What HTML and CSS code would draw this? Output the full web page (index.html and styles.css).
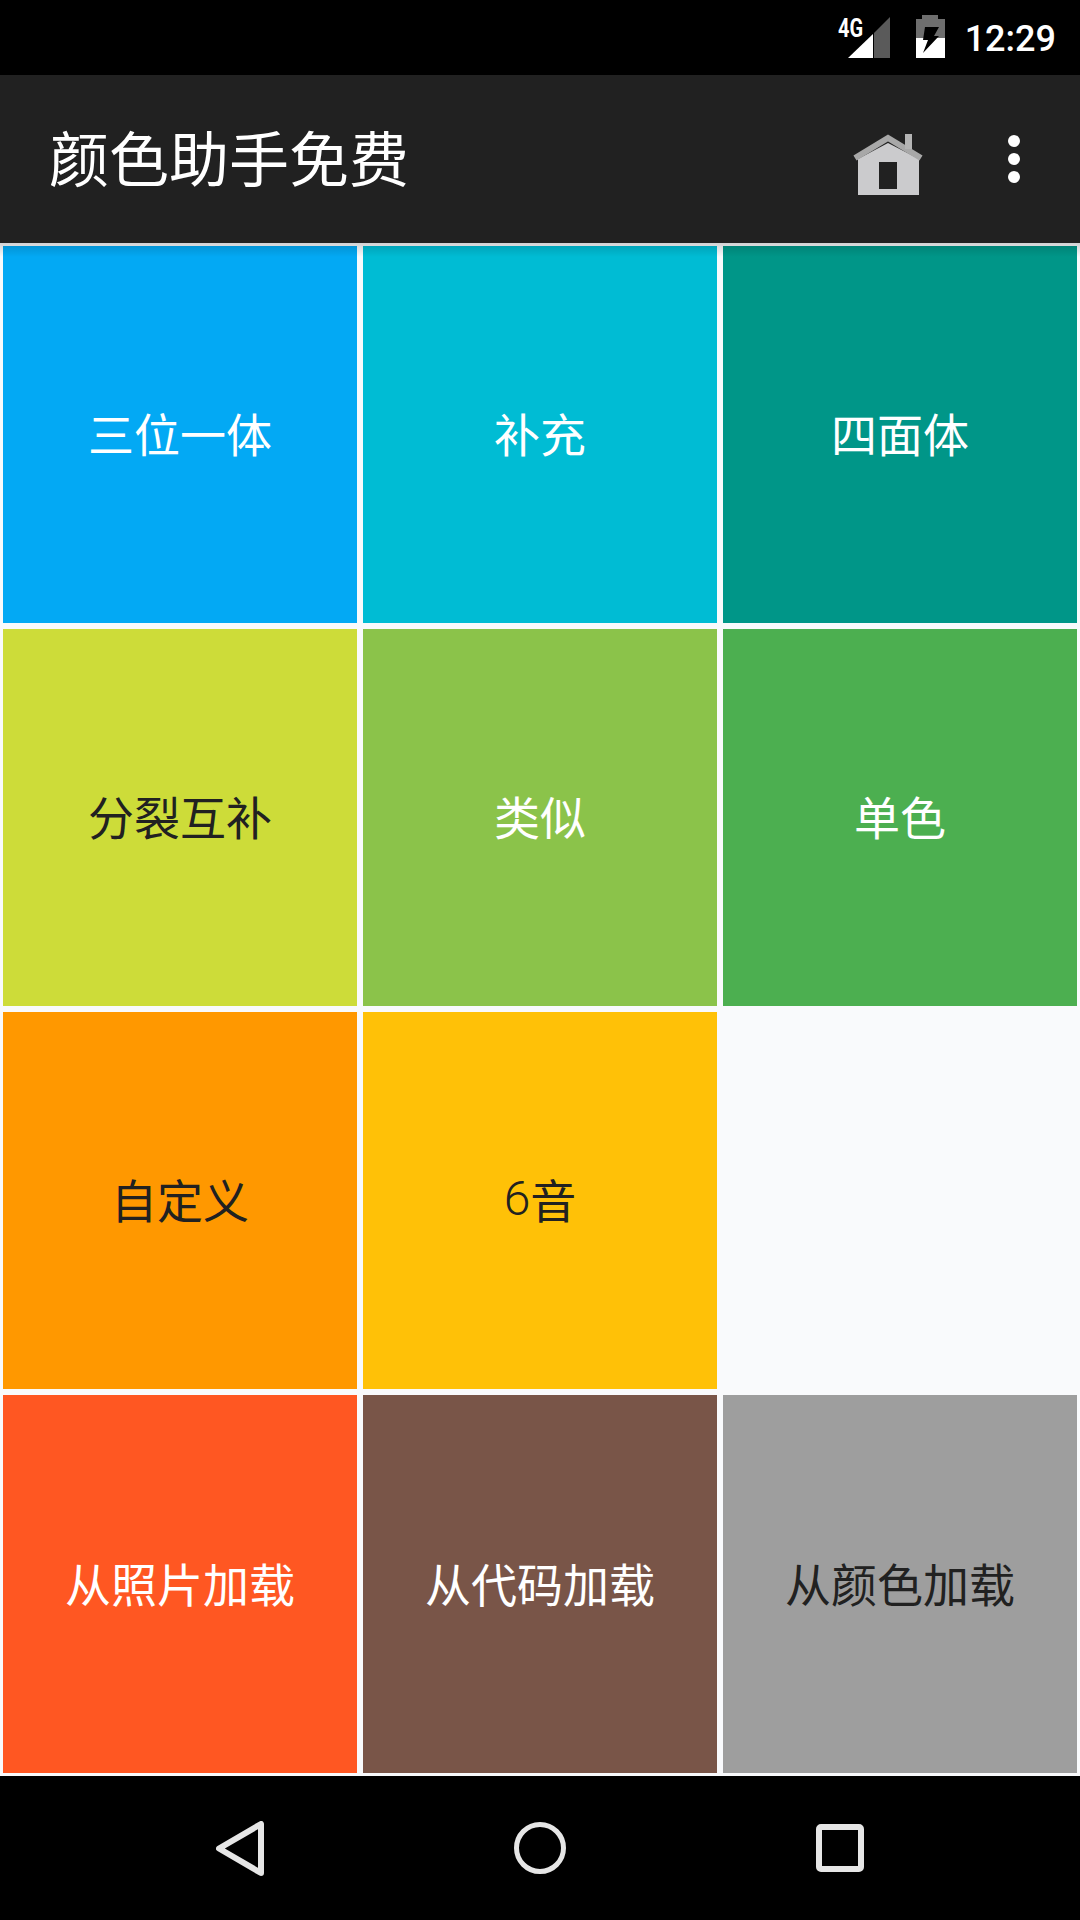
FILE: index.html
```html
<!DOCTYPE html>
<html lang="zh-CN">
<head>
  <meta charset="UTF-8">
  <title>颜色助手免费</title>
  <link rel="stylesheet" href="styles.css">
</head>
<body>

  <div class="status-bar">
    <div class="signal">
      <span class="signal-label">4G</span>
      <svg width="42" height="41" viewBox="0 0 42 41">
        <path d="M42 0V41H26V16Z" fill="#5a5a5a"/>
        <path d="M25 17V41H0Z" fill="#fff"/>
      </svg>
    </div>
    <svg class="battery" width="29" height="43" viewBox="0 0 29 43">
      <path d="M6 0H22V4H29V23H0V4H6Z" fill="#6e6e6e"/>
      <path d="M0 23H29V43H0Z" fill="#fff"/>
      <path d="M9 12H23L18 21H23L7 38L12 25H7Z" fill="#000"/>
    </svg>
    <span class="clock">12:29</span>
  </div>

  <div class="toolbar">
    <h1>颜色助手免费</h1>
    <svg class="home-icon" width="70" height="62" viewBox="0 0 70 62">
      <path d="M5 25L35 9L66 25V61H5Z" fill="#cbcbcd"/>
      <path d="M2 24L35 4L68 24" fill="none" stroke="#a8a8a8" stroke-width="6"/>
      <rect x="52" y="0" width="7" height="15" fill="#b4b4b4"/>
      <rect x="26" y="28" width="18" height="27" fill="#212121"/>
    </svg>
    <div class="overflow-menu"><i></i><i></i><i></i></div>
  </div>

  <div class="grid">
    <a class="tile" style="background:#03a9f4">三位一体</a>
    <a class="tile" style="background:#00bcd4">补充</a>
    <a class="tile" style="background:#009688">四面体</a>
    <a class="tile dark" style="background:#cddc39">分裂互补</a>
    <a class="tile" style="background:#8bc34a">类似</a>
    <a class="tile" style="background:#4caf50">单色</a>
    <a class="tile dark" style="background:#ff9800">自定义</a>
    <a class="tile dark" style="background:#ffc107"><span class="digit">6</span>音</a>
    <div class="tile-empty"></div>
    <a class="tile" style="background:#ff5722">从照片加载</a>
    <a class="tile" style="background:#795548">从代码加载</a>
    <a class="tile dark" style="background:#9e9e9e">从颜色加载</a>
  </div>

  <div class="nav-bar">
    <svg width="48" height="55" viewBox="0 0 48 55">
      <path d="M45 3V52L3 27.500Z" fill="none" stroke="#e6e6e6" stroke-width="6" stroke-linejoin="round"/>
    </svg>
    <svg width="52" height="52" viewBox="0 0 52 52">
      <circle cx="26" cy="26" r="23.500" fill="none" stroke="#e6e6e6" stroke-width="5"/>
    </svg>
    <svg width="48" height="48" viewBox="0 0 48 48">
      <rect x="3" y="3" width="42" height="42" rx="2" fill="none" stroke="#e6e6e6" stroke-width="6"/>
    </svg>
  </div>

</body>
</html>
```

FILE: styles.css
```css
* {
  box-sizing: border-box;
}

body {
  display: flex;
  flex-direction: column;
  width: 1080px;
  height: 1920px;
  margin: 0;
  background: #f9fafc;
  font-family: 'Noto Sans CJK SC', 'Noto Sans', sans-serif;
  overflow: hidden;
}

.status-bar {
  display: flex;
  align-items: center;
  justify-content: flex-end;
  height: 75px;
  padding: 0 24px 0 0;
  background: #000;
  color: #fff;
}

.signal {
  position: relative;
  width: 42px;
  height: 41px;
  margin-right: 26px;
}

.signal svg {
  display: block;
}

.signal-label {
  position: absolute;
  top: -3px;
  left: -10px;
  font-family: 'Roboto', sans-serif;
  font-size: 25px;
  font-weight: 700;
  transform: scaleX(0.8);
  transform-origin: left top;
}

.battery {
  margin: 0 20px 2px 0;
}

.clock {
  margin-top: 3px;
  font-family: 'Roboto', sans-serif;
  font-size: 36px;
  font-weight: 500;
}

.toolbar {
  display: flex;
  align-items: center;
  height: 168px;
  padding: 0 60px 0 49px;
  background: #212121;
  color: #fff;
}

.toolbar h1 {
  flex: 1;
  margin: 0 0 8px;
  font-size: 60px;
  font-weight: 400;
}

.home-icon {
  margin: 12px 85px 0 0;
}

.overflow-menu {
  display: flex;
  flex-direction: column;
  gap: 6px;
}

.overflow-menu i {
  width: 12px;
  height: 12px;
  border-radius: 50%;
  background: #fff;
}

.grid {
  flex: 1;
  display: grid;
  grid-template-columns: repeat(3, 1fr);
  grid-template-rows: repeat(3, 377px) 1fr;
  gap: 6px;
  padding: 3px;
  position: relative;
}

.grid::before {
  content: '';
  position: absolute;
  top: 0;
  left: 0;
  right: 0;
  height: 14px;
  background: linear-gradient(rgba(0, 0, 0, 0.16), rgba(0, 0, 0, 0));
}

.tile {
  display: flex;
  align-items: center;
  justify-content: center;
  padding-bottom: 5px;
  color: #fff;
  font-size: 46px;
  font-weight: 400;
}

.dark {
  color: #212121;
}

.digit {
  font-family: 'Roboto', sans-serif;
  font-size: 48px;
  font-weight: 300;
}

.nav-bar {
  display: grid;
  grid-template-columns: repeat(3, 300px);
  justify-content: center;
  justify-items: center;
  align-items: center;
  height: 144px;
  background: #000;
}
```
